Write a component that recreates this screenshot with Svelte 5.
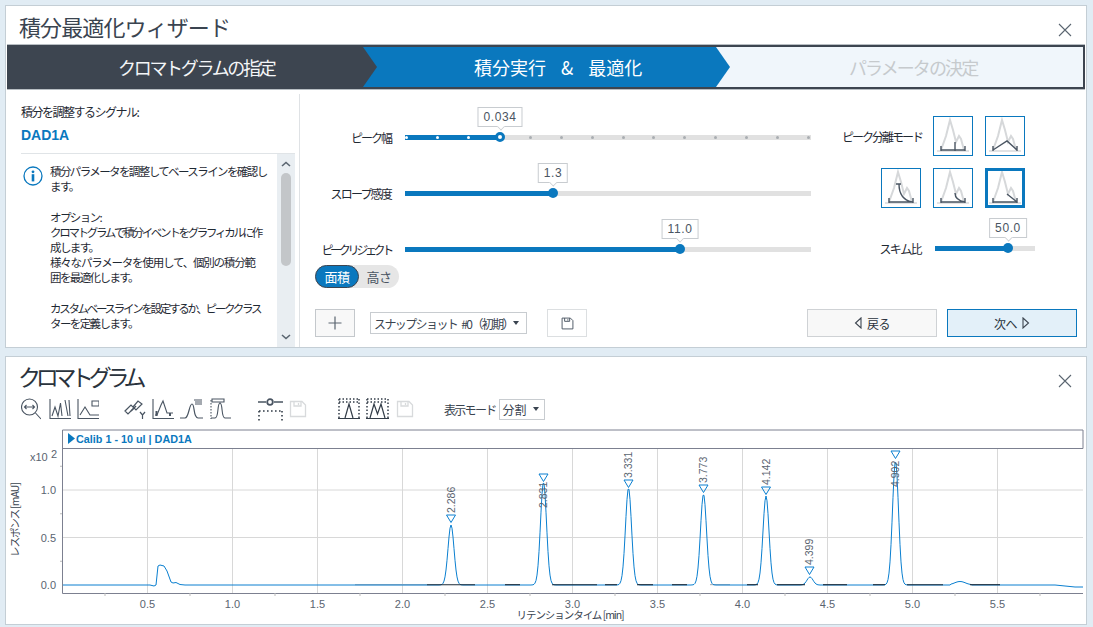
<script>
  const x = (t) => 62.5 + 170 * t;
  const y = (v) => 585 - 95 * v;
  const peaks = [
    { px: 451, top: 525, s: 3.0 },
    { px: 543.5, top: 482, s: 3.0 },
    { px: 628.5, top: 488, s: 3.0 },
    { px: 703.5, top: 494, s: 3.0 },
    { px: 766, top: 496, s: 3.0 },
    { px: 810, top: 577, s: 3.0 },
    { px: 895.5, top: 461, s: 3.0 }
  ];
  function traceY(px) {
    let v = 585;
    for (const p of peaks) v -= (585 - p.top) * Math.exp(-((px - p.px) ** 2) / (2 * p.s * p.s));
    if (px > 950 && px < 972) v -= 3.5 * Math.exp(-((px - 960) ** 2) / 60);
    if (px > 1055) v += Math.min(2, (px - 1055) / 10);
    return v;
  }
  let trace = '63,585 150,585 154,586 156,585 158,566 160,565 164,566 167,571 171,582 173,583 176,582.5 180,584.5 185,585';
  for (let p = 186; p <= 1083; p += 1) trace += ` ${p},${traceY(p).toFixed(1)}`;
  const darkSegs = [[427,475],[505,520],[552,597],[605,617],[637,653],[672,687],[747,758],[777,805],[823,847],[873,885],[907,943],[970,1000]];
  const greyBase = [[355,427],[710,730]];
  const gridX = [0.5,1,1.5,2,2.5,3,3.5,4,4.5,5,5.5];
  const minorX = [0.25,0.75,1.25,1.75,2.25,2.75,3.25,3.75,4.25,4.75,5.25,5.75];
  const marks = [
    { l: '2.286', mx: 451, my: 519, bx: 455, by: 513 },
    { l: '2.831', mx: 543.5, my: 478, bx: 547, by: 508 },
    { l: '3.331', mx: 628.5, my: 484, bx: 632, by: 478 },
    { l: '3.773', mx: 703.5, my: 489, bx: 707, by: 483 },
    { l: '4.142', mx: 766, my: 491, bx: 770, by: 485 },
    { l: '4.399', mx: 809.5, my: 571, bx: 813, by: 565 },
    { l: '4.902', mx: 895.5, my: 455, bx: 899, by: 487 }
  ];
  const ticks = Array.from({ length: 14 }, (_, i) => i);
  const base = 'M8 34H32M8 30V35M32 30V35';
</script>

{#snippet closeIcon()}
  <svg class="close" width="14" height="14" viewBox="0 0 14 14"><path d="M1 1L13 13M13 1L1 13" stroke="#5a6570" stroke-width="1.1" fill="none"/></svg>
{/snippet}

{#snippet modeBg()}
  <path d="M4 35H36" stroke="#d4d6d8" stroke-width="1.4"/>
  <path d="M8 34L13 20L17 4L20 14L23 26L26 20L28 23L31 34" stroke="#d6d8da" stroke-width="2" fill="none"/>
{/snippet}

{#snippet saveIcon(c, s)}
  <svg width={s} height={s} viewBox="0 0 18 18" fill="none" stroke={c} stroke-width="1.3"><path d="M1.5 1.5H13L16.5 5V16.5H1.5Z"/><path d="M5 1.5V6H12V1.5M9.5 3V5"/></svg>
{/snippet}

<div class="page">
  <section class="panel wizard">
    <header class="title-row">
      <h1 class="wide">積分最適化ウィザード</h1>
      {@render closeIcon()}
    </header>
    <div class="stepper">
      <div class="step one">クロマトグラムの指定</div>
      <div class="step two">積分実行 &amp; 最適化</div>
      <div class="step three">パラメータの決定</div>
    </div>
    <div class="wizard-body">
      <aside class="side">
        <div class="sig-label">積分を調整するシグナル:</div>
        <div class="sig-value">DAD1A</div>
        <div class="info">
          <svg class="info-icon" width="20" height="20" viewBox="0 0 20 20"><circle cx="10" cy="10" r="9" fill="none" stroke="#0a78be" stroke-width="1.3"/><circle cx="10" cy="5.8" r="1.4" fill="#0a78be"/><rect x="8.7" y="8.2" width="2.6" height="7.2" fill="#0a78be"/></svg>
          <div class="info-text">
            <div class="t1">積分パラメータを調整してベースラインを確認し</div>
            <div>ます。</div>
            <div class="blank"></div>
            <div class="t1">オプション:</div>
            <div class="t2">クロマトグラムで積分イベントをグラフィカルに作</div>
            <div>成します。</div>
            <div class="t3">様々なパラメータを使用して、個別の積分範</div>
            <div>囲を最適化します。</div>
            <div class="blank"></div>
            <div class="t2">カスタムベースラインを設定するか、ピーククラス</div>
            <div>ターを定義します。</div>
            <div class="blank"></div>
            <div class="t4">ピークリストから適用・配置は</div>
          </div>
          <div class="scroll">
            <svg width="10" height="6" viewBox="0 0 10 6"><path d="M1 5L5 1.5L9 5" stroke="#5a6570" stroke-width="1.6" fill="none"/></svg>
            <div class="thumb"></div>
            <svg width="10" height="6" viewBox="0 0 10 6"><path d="M1 1L5 4.5L9 1" stroke="#5a6570" stroke-width="1.6" fill="none"/></svg>
          </div>
        </div>
      </aside>
      <div class="main">
        <div class="top">
          <div class="sliders">
            <div class="row">
              <span class="lab l-width">ピーク幅</span>
              <div class="track">
                <div class="fill" style="width:95px"></div>
                {#each ticks as i}<i class="tick" class:on={i < 3} style="left:{1.7 + i * 30.9}px"></i>{/each}
                <b class="ring" style="left:95px"></b>
                <span class="bubble" style="left:95px">0.034</span>
              </div>
            </div>
            <div class="row">
              <span class="lab l-slope">スロープ感度</span>
              <div class="track">
                <div class="fill" style="width:148px"></div>
                <b class="dot" style="left:148px"></b>
                <span class="bubble" style="left:148px">1.3</span>
              </div>
            </div>
            <div class="row">
              <span class="lab l-reject">ピークリジェクト</span>
              <div class="track">
                <div class="fill" style="width:275px"></div>
                <b class="dot" style="left:275px"></b>
                <span class="bubble" style="left:275px">11.0</span>
              </div>
            </div>
            <div class="toggle"><span class="tg on">面積</span><span class="tg">高さ</span></div>
          </div>
          <div class="modes">
            <div class="mode-row">
              <span class="mode-lab">ピーク分離モード</span>
              <div class="mode"><svg width="38" height="38" viewBox="1 1 38 38" fill="none">{@render modeBg()}<path d="{base}M22 26V35" stroke="#4a5562" stroke-width="1.4"/></svg></div>
              <div class="mode"><svg width="38" height="38" viewBox="1 1 38 38" fill="none">{@render modeBg()}<path d="M8 30V35M32 30V35M8 34L22 25L32 34" stroke="#4a5562" stroke-width="1.4"/></svg></div>
            </div>
            <div class="mode-row">
              <div class="mode"><svg width="38" height="38" viewBox="1 1 38 38" fill="none">{@render modeBg()}<path d="{base}M15 16H20M18 16C18 25 22 32 31 34" stroke="#4a5562" stroke-width="1.4"/></svg></div>
              <div class="mode"><svg width="38" height="38" viewBox="1 1 38 38" fill="none">{@render modeBg()}<path d="{base}M22 25C22 30 26 33 32 34" stroke="#4a5562" stroke-width="1.4"/></svg></div>
              <div class="mode sel"><svg width="34" height="34" viewBox="3 3 34 34" fill="none">{@render modeBg()}<path d="{base}M22 26L32 34" stroke="#4a5562" stroke-width="1.4"/></svg></div>
            </div>
            <div class="row skim">
              <span class="mode-lab">スキム比</span>
              <div class="track short">
                <div class="fill" style="width:73px"></div>
                <b class="dot" style="left:73px"></b>
                <span class="bubble" style="left:73px">50.0</span>
              </div>
            </div>
          </div>
        </div>
        <div class="actions">
          <button class="btn icon plus"><svg width="14" height="14" viewBox="0 0 14 14"><path d="M7 0.5V13.5M0.5 7H13.5" stroke="#5a6570" stroke-width="1.2"/></svg></button>
          <div class="select snap"><span>スナップショット #0（初期）</span><i class="caret"></i></div>
          <button class="btn icon save">{@render saveIcon('#4a5562', 13)}</button>
          <span class="spacer"></span>
          <button class="btn nav"><svg width="8" height="12" viewBox="0 0 8 12"><path d="M7 1L1.5 6L7 11Z" fill="none" stroke="#3d4550" stroke-width="1.1"/></svg>戻る</button>
          <button class="btn nav next">次へ<svg width="8" height="12" viewBox="0 0 8 12"><path d="M1 1L6.5 6L1 11Z" fill="none" stroke="#3d4550" stroke-width="1.1"/></svg></button>
        </div>
      </div>
    </div>
  </section>

  <section class="panel chart">
    <header class="title-row small">
      <h1 class="kana">クロマトグラム</h1>
      {@render closeIcon()}
    </header>
    <div class="toolbar">
      <svg width="20" height="22" viewBox="0 0 20 22" fill="none" stroke="#4a5562" stroke-width="1.1"><circle cx="8.5" cy="9" r="8"/><path d="M14.5 15L20 21M3.5 9H13.5M5.5 7L3.5 9L5.5 11M11.5 7L13.5 9L11.5 11"/></svg>
      <svg class="g8" width="22" height="22" viewBox="0 0 22 22" fill="none" stroke="#4a5562" stroke-width="1.1"><path d="M1 1V20.5H22"/><path d="M3 18L6 9L9 18L11.5 5L13 18M16 2L19 18M20 2L21 18" /></svg>
      <svg class="g6" width="22" height="22" viewBox="0 0 22 22" fill="none" stroke="#4a5562" stroke-width="1.1"><path d="M1 1V20.5H22"/><path d="M3 17L8 9L13 17H22M15 3H22V8H15Z"/></svg>
      <svg class="g25" width="22" height="22" viewBox="0 0 22 22" fill="none" stroke="#4a5562" stroke-width="1.4"><path d="M1 13L7 7L10 10L4 16ZM9 9L14 3L18 6L12 12L9 9ZM16 14L18.5 17L21 14M18.5 17V21" stroke-width="1.2"/><path d="M7 13L12 8"/></svg>
      <svg class="g6" width="22" height="22" viewBox="0 0 22 22" fill="none" stroke="#4a5562" stroke-width="1.1"><path d="M1 1V20.5H22"/><path d="M3 17H5L9 7L11 3L15 15H21"/><path d="M4.5 13V18M18 15V18" stroke-width="2"/></svg>
      <svg class="g6" width="23" height="22" viewBox="0 0 23 22" fill="none" stroke="#4a5562" stroke-width="1.2"><path d="M0 20H5C9 20 9 6 12 6C15 6 13 20 18 20H23M14 2H22M15 4H22M15 6H22"/></svg>
      <svg class="g6" width="22" height="22" viewBox="0 0 22 22" fill="none" stroke="#4a5562" stroke-width="1.1"><path d="M2 2V21" stroke-dasharray="1.5 1.5"/><path d="M2 20H6C10 20 8 5 11 5C14 5 12 20 16 20H22M3 1H15V4H3Z"/></svg>
      <svg class="g27" width="25" height="24" viewBox="0 0 25 24" fill="none" stroke="#4a5562" stroke-width="1.3"><path d="M0 5H8M16 5H25"/><circle cx="12" cy="5" r="2.8" stroke-width="1.8"/><path d="M1 14H24M1 14V24M24 14V24" stroke="#333d48" stroke-width="1.6" stroke-dasharray="1.6 2.4"/></svg>
      <span class="save-off">{@render saveIcon('#d8dadc', 18)}</span>
      <svg class="g31" width="22" height="22" viewBox="0 0 22 22" fill="none" stroke="#333d48" stroke-width="1.2"><path d="M1 1H21M1 1V20M21 1V20M1 4H21" stroke-width="1.5" stroke-dasharray="1.5 2"/><path d="M0 20.5H22M7 20L11 6L15 20"/></svg>
      <svg class="g6" width="23" height="22" viewBox="0 0 23 22" fill="none" stroke="#333d48" stroke-width="1.2"><path d="M1 1H22M1 1V20M22 1V20M1 4H22" stroke-width="1.5" stroke-dasharray="1.5 2"/><path d="M0 20.5H23M4 20L8 6L11.5 16L15 6L19 20"/></svg>
      <span class="save-off s7">{@render saveIcon('#d8dadc', 18)}</span>
      <span class="mode-text">表示モード</span>
      <div class="select view"><span>分割</span><i class="caret"></i></div>
    </div>
    <svg class="plot" viewBox="6 421 1080 203" width="1080" height="203">
      <path d="M62.5 430H1083M62.5 448.5H1083M62.5 430V593.5H1083M1083 430V448.5" stroke="#7c8090" fill="none"/>
      <path d="M68 433L75 438.5L68 444Z" fill="#0a78be"/>
      <text x="76" y="443" class="hdr">Calib 1 - 10 ul | DAD1A</text>

      {#each gridX as t}<path d="M{x(t)} 449V593" stroke="#d8d8d8"/>{/each}
      {#each [0.5, 1] as v}<path d="M63 {y(v)}H1083" stroke="#d8d8d8"/>{/each}
      {#each minorX as t}<path d="M{x(t)} 593V596" stroke="#bbb"/>{/each}
      {#each [0.25, 0.75, 1.25] as v}<path d="M60 {y(v)}H62" stroke="#bbb"/>{/each}

      {#each greyBase as s}<path d="M{s[0]} 584.6H{s[1]}" stroke="#b4b8bc" stroke-width="1.2"/>{/each}
      <polyline points={trace} fill="none" stroke="#0a7fd0" stroke-width="1"/>
      {#each darkSegs as s}<path d="M{s[0]} 584.7H{s[1]}" stroke="#1d2a36" stroke-width="1.1"/>{/each}

      {#each gridX as t}<text class="ax" x={x(t)} y="608" text-anchor="middle">{t.toFixed(1)}</text>{/each}
      {#each [0, 0.5, 1] as v}<text class="ax" x="56" y={y(v) + 4} text-anchor="end">{v.toFixed(1)}</text>{/each}
      <text class="ax" x="30" y="461">x10</text>
      <text class="ax" x="51" y="458">2</text>
      <text class="axt" transform="translate(19 557) rotate(-90)">レスポンス [mAU]</text>
      <text class="axt" x="570" y="619" text-anchor="middle">リテンションタイム [min]</text>

      {#each marks as m}
        <text class="pk" transform="translate({m.bx} {m.by}) rotate(-90)">{m.l}</text>
        <path d="M{m.mx - 4.5} {m.my - 4}H{m.mx + 4.5}L{m.mx} {m.my + 3.5}Z" fill="none" stroke="#0a7fd0" stroke-width="1"/>
      {/each}
    </svg>
  </section>
</div>

<style>
  :global(body) {
    margin: 0;
    background: #e1ecf4;
  }
  .page {
    width: 1082px;
    height: 627px;
    padding: 5px 0 0 5px;
    display: flex;
    flex-direction: column;
    gap: 8px;
    font-family: "Noto Sans CJK JP", "Liberation Sans", sans-serif;
    color: #1f2933;
  }
  .panel {
    background: #fff;
    border: 1px solid #c4ced5;
    display: flex;
    flex-direction: column;
    overflow: hidden;
  }
  .wizard { height: 341px; }
  .chart { height: 267px; }
  .title-row {
    height: 39px;
    flex: none;
    display: flex;
    align-items: center;
    justify-content: space-between;
    padding: 0 14px 0 13px;
  }
  .title-row .close { margin-top: 9px; }
  .title-row.small { height: 38px; }
  h1 {
    margin: 0;
    font-weight: 400;
    color: #3a4450;
    line-height: 1;
  }
  h1.wide { font-size: 22px; letter-spacing: -0.9px; margin-top: 0; }
  h1.kana { font-size: 23px; letter-spacing: -5.3px; color: #2a333d; margin: 1px 0 0 -1px; }
  .stepper {
    flex: none;
    height: 44px;
    margin: 0 1px;
    box-sizing: border-box;
    display: flex;
    border: 2px solid #3d4550;
    box-shadow: 0 -1px 0 #b8bec3, 0 1px 0 #b8bec3;
    background: #f0f6fb;
  }
  .step {
    position: relative;
    display: flex;
    align-items: center;
    font-size: 18px;
    letter-spacing: -1.9px;
    box-sizing: border-box;
    white-space: pre;
  }
  .step.one {
    width: 354px;
    background: #3d4550;
    color: #f4f6f8;
    padding-left: 109px;
    letter-spacing: -2.3px;
    z-index: 2;
  }
  .step.two {
    width: 353px;
    background: #0a78be;
    color: #fff;
    padding-left: 111px;
    letter-spacing: 0;
    word-spacing: 11px;
    z-index: 1;
  }
  .step.three {
    flex: 1;
    color: #c6cacd;
    padding-left: 133px;
    letter-spacing: -1.9px;
  }
  .step.one::after, .step.two::after {
    content: "";
    position: absolute;
    top: 0;
    bottom: 0;
    left: 100%;
    width: 14px;
    clip-path: polygon(0 0, 100% 50%, 0 100%);
  }
  .step.one::after { background: #3d4550; }
  .step.two::after { background: #0a78be; }
  .wizard-body {
    flex: 1;
    min-height: 0;
    display: flex;
  }
  .side {
    width: 293px;
    flex: none;
    box-sizing: border-box;
    padding: 15px 4px 0 15px;
    display: flex;
    flex-direction: column;
  }
  .sig-label {
    height: 16px;
    font-size: 12px;
    line-height: 16px;
    letter-spacing: -1.5px;
  }
  .sig-value {
    margin-top: 6px;
    height: 18px;
    line-height: 18px;
    font: bold 14px/18px "Liberation Sans", sans-serif;
    color: #0a78be;
  }
  .info {
    margin-top: 9px;
    flex: 1;
    min-height: 0;
    display: flex;
    border-top: 1px solid #e0e4e7;
    overflow: hidden;
  }
  .info-icon {
    flex: none;
    margin: 12px 0 0 2px;
  }
  .info-text {
    flex: 1;
    min-width: 0;
    padding: 10px 0 0 7px;
    font-size: 11.5px;
    line-height: 15.2px;
    letter-spacing: -1.6px;
    white-space: nowrap;
    overflow: hidden;
  }
  .blank { height: 15.2px; }
  .t2 { letter-spacing: -2.3px; }
  .t3 { letter-spacing: -1.2px; }
  .t4 { padding-left: 30px; }
  .scroll {
    flex: none;
    width: 18px;
    background: #e9eef2;
    display: flex;
    flex-direction: column;
    align-items: center;
    justify-content: space-between;
    padding: 7px 0;
    box-sizing: border-box;
  }
  .thumb {
    width: 10px;
    height: 93px;
    margin: 6px 0 auto;
    background: #c3c6c9;
    border-radius: 5px;
  }
  .main {
    flex: 1;
    min-width: 0;
    margin-top: 5px;
    border-left: 1px solid #dfe2e5;
    display: flex;
    flex-direction: column;
  }
  .top { display: flex; }
  .sliders {
    width: 511px;
    padding-top: 25px;
    display: flex;
    flex-direction: column;
    gap: 20px;
  }
  .row {
    height: 36px;
    display: flex;
    align-items: center;
  }
  .lab {
    width: 91px;
    margin-right: 14px;
    flex: none;
    text-align: right;
    font-size: 12px;
    white-space: nowrap;
  }
  .l-width { letter-spacing: -2px; }
  .l-slope { letter-spacing: -1.8px; }
  .l-reject { letter-spacing: -3.3px; }
  .track {
    position: relative;
    width: 406px;
    height: 5px;
    background: #e1e1e1;
  }
  .track.short { width: 100px; }
  .fill {
    position: absolute;
    left: 0;
    top: 0;
    bottom: 0;
    background: #0a78be;
  }
  .tick {
    position: absolute;
    top: 1px;
    width: 3px;
    height: 3px;
    margin-left: -1.5px;
    border-radius: 50%;
    background: #a9adb1;
  }
  .tick.on { background: #fff; }
  .dot, .ring {
    position: absolute;
    top: 50%;
    width: 10px;
    height: 10px;
    transform: translate(-50%, -50%);
    border-radius: 50%;
    background: #0a78be;
  }
  .ring {
    box-sizing: border-box;
    background: #fff;
    border: 3px solid #0a78be;
  }
  .bubble {
    position: absolute;
    bottom: 13px;
    transform: translateX(-50%);
    padding: 0 5px;
    height: 18px;
    line-height: 18px;
    border: 1px solid #c8ccd0;
    background: #fff;
    font: 12px/18px "Liberation Sans", sans-serif;
    letter-spacing: 0.6px;
    color: #4a5562;
    white-space: nowrap;
  }
  .bubble::after {
    content: "";
    position: absolute;
    left: 50%;
    bottom: -4px;
    width: 6px;
    height: 6px;
    margin-left: -3px;
    background: #fff;
    border-right: 1px solid #c8ccd0;
    border-bottom: 1px solid #c8ccd0;
    transform: rotate(45deg) scale(0.8);
  }
  .toggle {
    margin: -22px 0 0 15px;
    width: 84px;
    height: 23px;
    border-radius: 12px;
    background: #e6e6e6;
    display: flex;
    font-size: 13px;
    color: #4a5562;
    letter-spacing: -0.4px;
  }
  .tg {
    width: 44px;
    text-align: center;
    line-height: 21px;
  }
  .tg + .tg { width: 40px; line-height: 23px; }
  .tg.on {
    background: #0a78be;
    color: #fff;
    border: 1px solid #3d4550;
    border-radius: 12px;
    box-sizing: border-box;
  }
  .modes {
    width: 224px;
    padding-top: 22px;
    display: flex;
    flex-direction: column;
    align-items: flex-end;
  }
  .mode-row {
    display: flex;
    align-items: center;
    gap: 12px;
    margin: 0 10px 12px 0;
    height: 40px;
  }
  .mode-lab {
    font-size: 12px;
    letter-spacing: -2px;
    white-space: nowrap;
    margin-right: -1px;
  }
  .mode {
    width: 40px;
    height: 40px;
    box-sizing: border-box;
    border: 1px solid #0a78be;
    display: flex;
  }
  .mode.sel { border-width: 3px; }
  .skim {
    margin-top: 10px;
  }
  .skim .mode-lab { margin-right: 14px; letter-spacing: -1.6px; }
  .actions {
    margin-top: auto;
    padding: 0 9px 10px 15px;
    display: flex;
    align-items: center;
  }
  .btn {
    height: 28px;
    box-sizing: border-box;
    background: #f8f8f8;
    border: 1px solid #cfd2d5;
    font-family: inherit;
    font-size: 12px;
    color: #2a333d;
    padding: 0;
    display: flex;
    align-items: center;
    justify-content: center;
    gap: 5px;
    letter-spacing: -0.6px;
  }
  .icon { width: 40px; }
  .plus { border-color: #c4c8cc; }
  .icon.save { background: #fff; margin-left: 20px; border-color: #dcdfe1; }
  .spacer { flex: 1; }
  .nav { width: 130px; }
  .next {
    margin-left: 10px;
    background: #e3f0f9;
    border-color: #0a78be;
  }
  .select {
    box-sizing: border-box;
    border: 1px solid #c8ccd0;
    background: #fff;
    display: flex;
    align-items: center;
    justify-content: space-between;
    font-size: 12px;
    color: #3a4450;
    white-space: nowrap;
  }
  .snap {
    margin-left: 15px;
    width: 157px;
    height: 22px;
    padding: 0 3px 0 3px;
    letter-spacing: -1.6px;
    word-spacing: 3px;
  }
  .view {
    width: 46px;
    height: 21px;
    padding: 0 5px 0 3px;
  }
  .caret {
    width: 0;
    height: 0;
    margin-right: 4px;
    border: 3.5px solid transparent;
    border-top: 4px solid #3a4450;
    border-bottom: 0;
  }
  .view .caret { margin-right: 0; }
  .toolbar {
    flex: none;
    height: 26px;
    padding: 2px 0 0 15px;
    box-sizing: border-box;
    display: flex;
    align-items: center;
  }
  .g8 { margin-left: 8px; }
  .g6 { margin-left: 6px; }
  .g25 { margin-left: 25px; }
  .g27 { margin-left: 27px; }
  .g31 { margin-left: 31px; }
  .save-off { margin-left: 6px; display: flex; }
  .s7 { margin-left: 7px; }
  .mode-text {
    margin: 0 3px 0 30px;
    font-size: 12px;
    color: #3a4450;
    letter-spacing: -1.7px;
    white-space: nowrap;
  }
  .plot { display: block; flex: none; }
  .hdr {
    font: bold 10.8px "Liberation Sans", sans-serif;
    fill: #0a78be;
  }
  .ax {
    font: 11px "Liberation Sans", sans-serif;
    fill: #5a6470;
  }
  .axt {
    font: 10.5px "Noto Sans CJK JP", "Liberation Sans", sans-serif;
    fill: #3a4450;
    letter-spacing: -1.05px;
  }
  .pk {
    font: 10.5px "Liberation Sans", sans-serif;
    fill: #5a6470;
  }
</style>
